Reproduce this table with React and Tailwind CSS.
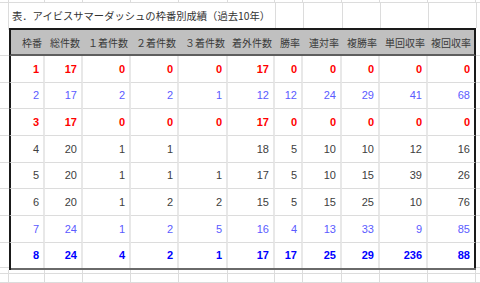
import React from "react";

const W = [
  "w-[36px]",
  "w-[38px]",
  "w-[48px]",
  "w-[48px]",
  "w-[49px]",
  "w-[47px]",
  "w-[28px]",
  "w-[39px]",
  "w-[38px]",
  "w-[48px]",
  "w-[48px]",
];

const HEAD = ["枠番", "総件数", "１着件数", "２着件数", "３着件数", "着外件数", "勝率", "連対率", "複勝率", "単回収率", "複回収率"];

const ROWS = [
  { h: "h-[27px]", c: "text-[#ff0000] font-bold", v: [1, 17, 0, 0, 0, 17, 0, 0, 0, 0, 0] },
  { h: "h-[26px]", c: "text-[#5b5bff]", v: [2, 17, 2, 2, 1, 12, 12, 24, 29, 41, 68] },
  { h: "h-[27px]", c: "text-[#ff0000] font-bold", v: [3, 17, 0, 0, 0, 17, 0, 0, 0, 0, 0] },
  { h: "h-[27px]", c: "text-[#404040]", v: [4, 20, 1, 1, "", 18, 5, 10, 10, 12, 16] },
  { h: "h-[26px]", c: "text-[#404040]", v: [5, 20, 1, 1, 1, 17, 5, 10, 15, 39, 26] },
  { h: "h-[27px]", c: "text-[#404040]", v: [6, 20, 1, 2, 2, 15, 5, 15, 25, 10, 76] },
  { h: "h-[27px]", c: "text-[#5b5bff]", v: [7, 24, 1, 2, 5, 16, 4, 13, 33, 9, 85] },
  { h: "h-[25px]", c: "text-[#0000ff] font-bold", v: [8, 24, 4, 2, 1, 17, 17, 25, 29, 236, 88], last: true },
];

function GridRow({ h }) {
  return (
    <div className={`flex ${h}`}>
      <div className="w-[9px] shrink-0 border-r border-b border-[#dcdcdc]" />
      {W.map((w, i) => (
        <div key={i} className={`${w} shrink-0 border-r border-b border-[#dcdcdc]`} />
      ))}
      <div className="w-[4px] shrink-0 border-b border-[#dcdcdc]" />
    </div>
  );
}

export default function App() {
  return (
    <div className="w-[480px] h-[283px] overflow-hidden bg-white flex flex-col" style={{ fontFamily: '"Liberation Sans", Arial, sans-serif' }}>
      <GridRow h="h-[7px]" />
      {/* title row */}
      <div className="flex h-[25px] shrink-0">
        <div className="w-[9px] shrink-0 border-r border-[#dcdcdc]" />
        <div
          className="w-[267px] shrink-0 border-r border-[#dcdcdc] flex items-center pl-[3px] text-[10.3px] text-[#333] whitespace-nowrap"
          style={{ fontFamily: '"Noto Sans CJK JP", sans-serif' }}
        >
          表．アイビスサマーダッシュの枠番別成績（過去10年）
        </div>
        {W.slice(6).map((w, i) => (
          <div key={i} className={`${w} shrink-0 border-r border-[#dcdcdc]`} />
        ))}
        <div className="w-[4px] shrink-0" />
      </div>
      {/* top border */}
      <div className="flex h-[2px] shrink-0">
        <div className="w-[9px] shrink-0 border-r border-[#dcdcdc]" />
        <div className="w-[467px] shrink-0 bg-[#1a1a1a]" />
        <div className="w-[4px] shrink-0" />
      </div>
      {/* header */}
      <div className="flex h-[26px] shrink-0">
        <div className="w-[9px] shrink-0 border-b border-[#dcdcdc]" />
        <div
          className="w-[467px] shrink-0 flex bg-[#c0c0c0] border-l-2 border-r-2 border-l-[#1a1a1a] border-r-[#1a1a1a] border-b-2 border-b-[#5e5e5e] text-[10px] text-[#3a3a3a]"
          style={{ fontFamily: '"Noto Sans CJK JP", sans-serif' }}
        >
          {HEAD.map((t, i) => (
            <div
              key={i}
              className={`${i === 0 ? "w-[34px]" : i === 10 ? "w-[46px]" : W[i]} shrink-0 flex items-center justify-end pr-[3px] whitespace-nowrap`}
            >
              {t}
            </div>
          ))}
        </div>
        <div className="w-[4px] shrink-0 border-b border-[#dcdcdc]" />
      </div>
      {/* data rows */}
      {ROWS.map((r, ri) => (
        <div key={ri} className={`flex ${r.h} shrink-0`}>
          <div className="w-[9px] shrink-0 border-b border-[#dcdcdc]" />
          {r.v.map((v, i) => (
            <div
              key={i}
              className={`${W[i]} shrink-0 flex items-center justify-end pr-[4px] text-[11px] ${r.c} ${
                i === 0 ? "border-l-2 border-l-[#1a1a1a]" : ""
              } ${i === 10 ? "border-r-2 border-r-[#1a1a1a]" : "border-r-2 border-r-[#e8e8e8]"} ${
                r.last ? "" : "border-b border-b-[#dcdcdc]"
              }`}
            >
              {v}
            </div>
          ))}
          <div className="w-[4px] shrink-0 border-b border-[#dcdcdc]" />
        </div>
      ))}
      {/* bottom border */}
      <div className="flex h-[2px] shrink-0">
        <div className="w-[9px] shrink-0" />
        <div className="w-[467px] shrink-0 bg-[#6a6a6a] border-l-2 border-l-[#1a1a1a]" />
        <div className="w-[4px] shrink-0" />
      </div>
      <GridRow h="h-[9px]" />
      <GridRow h="h-[20px]" />
    </div>
  );
}
